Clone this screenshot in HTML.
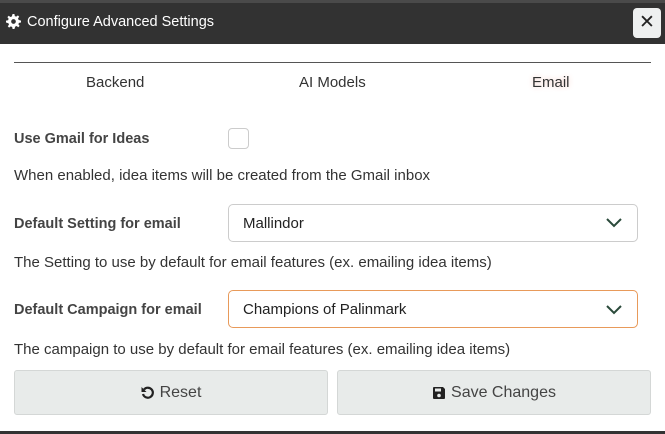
<html><head><style>
body{margin:0;width:665px;height:434px;overflow:hidden;background:#fff;font-family:"Liberation Sans",sans-serif;color:#333;position:relative}
.a{position:absolute}
.hdr{left:0;top:0;width:665px;height:44px;background:#323232}
.top{left:0;top:0;width:665px;height:3px;background:#4a4a4a}
.t{font-size:14.5px;color:#fff}
.lbl{font-weight:bold;font-size:14.5px;color:#444}
.d{font-size:15px;color:#333}
.sel{border:1px solid #ccc;border-radius:5px;height:38px;background:#fff;box-sizing:border-box;font-size:15px;color:#222;padding:10px 14px}
.btn{background:#e8ebea;border:1px solid #d4d7d6;border-radius:3px;box-sizing:border-box;height:45px;top:370px;font-size:16px;color:#444;display:flex;align-items:center;justify-content:center;gap:5px}
</style></head><body>
<div class="a hdr"></div><div class="a top"></div>
<svg class="a" style="left:6px;top:14px" width="15" height="15" viewBox="0 0 16 16"><path fill="#fff" d="M7 0h2l.4 2.2 1.5.6 1.8-1.3 1.4 1.4-1.3 1.8.6 1.5L16 7v2l-2.2.4-.6 1.5 1.3 1.8-1.4 1.4-1.8-1.3-1.5.6L9 16H7l-.4-2.2-1.5-.6-1.8 1.3-1.4-1.4 1.3-1.8-.6-1.5L0 9V7l2.2-.4.6-1.5-1.3-1.8 1.4-1.4 1.8 1.3 1.5-.6z"/><circle cx="8" cy="8" r="2.5" fill="#323232"/></svg>
<div class="a t" style="left:27px;top:14px">Configure Advanced Settings</div>
<div class="a" style="left:633px;top:8px;width:28px;height:30px;background:#eef0f0;border-radius:4px;text-align:center;line-height:30px;font-size:19px;color:#222">✕</div>
<div class="a" style="left:14px;top:62px;width:637px;height:1px;background:#555"></div>
<div class="a d" style="left:86px;top:74px">Backend</div>
<div class="a d" style="left:299px;top:74px">AI Models</div>
<div class="a d" style="left:532px;top:74px;text-shadow:0 0 6px #f3c9c0">Email</div>
<div class="a lbl" style="left:14px;top:131px">Use Gmail for Ideas</div>
<div class="a" style="left:228px;top:128px;width:21px;height:21px;border:1px solid #ccc;border-radius:4px;box-sizing:border-box"></div>
<div class="a d" style="left:14px;top:167px">When enabled, idea items will be created from the Gmail inbox</div>
<div class="a lbl" style="left:14px;top:216px">Default Setting for email</div>
<div class="a sel" style="left:228px;top:204px;width:410px">Mallindor</div>
<svg class="a" style="left:606px;top:218px" width="16" height="10"><path d="M1 1l7 7 7-7" fill="none" stroke="#2a4a3a" stroke-width="2"/></svg>
<div class="a d" style="left:14px;top:254px">The Setting to use by default for email features (ex. emailing idea items)</div>
<div class="a lbl" style="left:14px;top:302px">Default Campaign for email</div>
<div class="a sel" style="left:228px;top:290px;width:410px;border-color:#e89a5a">Champions of Palinmark</div>
<svg class="a" style="left:606px;top:305px" width="16" height="10"><path d="M1 1l7 7 7-7" fill="none" stroke="#2a4a3a" stroke-width="2"/></svg>
<div class="a d" style="left:14px;top:341px">The campaign to use by default for email features (ex. emailing idea items)</div>
<div class="a btn" style="left:14px;width:314px"><svg width="14" height="14" viewBox="0 0 14 14"><path d="M3 3.5A5 5 0 1 1 2 8" fill="none" stroke="#222" stroke-width="2.2"/><path d="M0.5 1v5h5z" fill="#222"/></svg>Reset</div>
<div class="a btn" style="left:337px;width:314px"><svg width="14" height="14" viewBox="0 0 14 14"><path d="M1 2a1 1 0 0 1 1-1h9l2 2v9a1 1 0 0 1-1 1H2a1 1 0 0 1-1-1z" fill="#222"/><rect x="3" y="2.5" width="6" height="3" fill="#e8ebea"/><circle cx="7" cy="9.5" r="1.8" fill="#e8ebea"/></svg>Save Changes</div>
<div class="a" style="left:0;top:431px;width:665px;height:3px;background:#333"></div>
</body></html>
